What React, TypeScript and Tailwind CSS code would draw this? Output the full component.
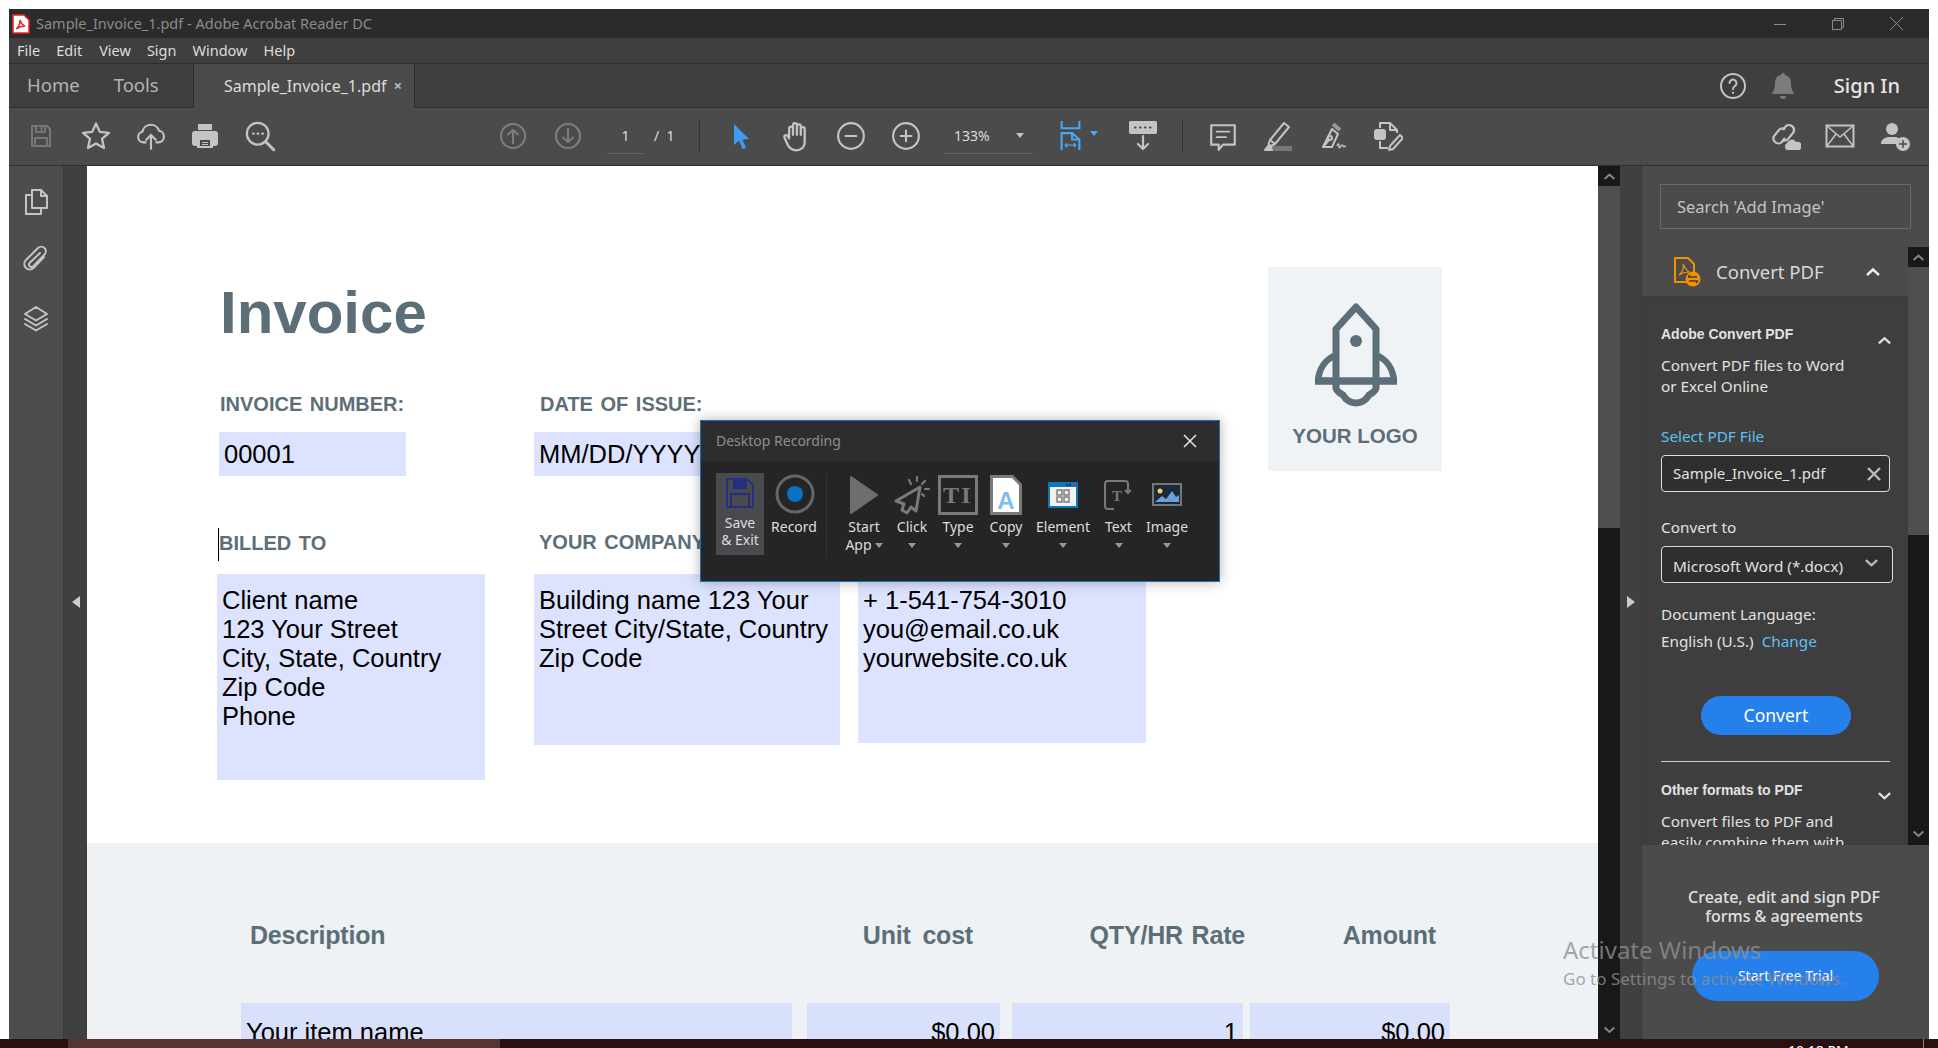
import React from 'react';

const ui = "font-['Noto_Sans',sans-serif]";

type IconProps = { children: React.ReactNode; size?: number; className?: string };

function Ico({ children, size = 28, className = 'text-[#c4c4c4]' }: IconProps) {
  return (
    <svg width={size} height={size} viewBox="0 0 28 28" fill="none" stroke="currentColor" strokeWidth="2" strokeLinejoin="round" strokeLinecap="round" className={className}>
      {children}
    </svg>
  );
}

function Slot({ children, w = 'w-[55px]' }: { children: React.ReactNode; w?: string }) {
  return <div className={`${w} h-full flex items-center justify-center shrink-0`}>{children}</div>;
}

function Caret({ className = 'border-t-[#c4c4c4]' }: { className?: string }) {
  return <span className={`inline-block w-0 h-0 border-l-[4px] border-r-[4px] border-t-[5px] border-l-transparent border-r-transparent ${className}`} />;
}

function Chevron({ up = false, className = 'text-[#aaa]', size = 16 }: { up?: boolean; className?: string; size?: number }) {
  return (
    <svg width={size} height={size} viewBox="0 0 16 16" fill="none" stroke="currentColor" strokeWidth="2.4" className={className}>
      <path d={up ? 'M2 11l6-5.5 6 5.5' : 'M2 5.5l6 5.5 6-5.5'} />
    </svg>
  );
}

function Toolbar() {
  return (
    <div className="h-[58px] bg-[#4b4b4b] border-b border-[#2e2e2e] flex items-center pl-[4px] pr-[7px] pb-[2px] shrink-0">
      <Slot>
        <Ico className="text-[#777]"><path d="M5 4h15l3 3v17H5z" /><path d="M9 4v6h9V4M14.500 6v2" /><path d="M8 24v-8h12v8" /></Ico>
      </Slot>
      <Slot>
        <Ico size={32}><path d="M14 3l3.300 7.400 8 .8-6 5.400 1.700 7.900L14 20.500 7 24.500l1.700-7.900-6-5.400 8-.8z" /></Ico>
      </Slot>
      <Slot>
        <Ico size={30}><path d="M9 20H7a5 5 0 0 1-1-9.900 8 8 0 0 1 15.500-1A5.500 5.500 0 0 1 21 20h-2" /><path d="M14 26V13M9.500 17.500L14 13l4.500 4.500" /></Ico>
      </Slot>
      <div className="w-[54px] h-full flex items-center justify-center shrink-0">
        <svg width="28" height="28" viewBox="0 0 28 28" className="text-[#c4c4c4]" fill="currentColor">
          <path d="M7 2h14v6H7z" />
          <path fillRule="evenodd" d="M4 9h20a3 3 0 0 1 3 3v9a3 3 0 0 1-3 3h-2v2H6v-2H4a3 3 0 0 1-3-3v-9a3 3 0 0 1 3-3zm5 9v6h10v-6z" />
          <path d="M11 20h6v1h-6zM11 22h6v1h-6z" />
        </svg>
      </div>
      <Slot>
        <Ico size={32}><circle cx="12" cy="12" r="9.500" /><path d="M19 19l7 7" strokeWidth="2.600" /><path d="M8 12h.5M12 12h.5M16 12h.5" /></Ico>
      </Slot>
      <div className="w-[198px] shrink-0" />
      <Slot>
        <Ico className="text-[#7e7e7e]"><circle cx="14" cy="14" r="12" /><path d="M14 21V8M9 12.500L14 8l5 4.500" /></Ico>
      </Slot>
      <Slot>
        <Ico className="text-[#7e7e7e]"><circle cx="14" cy="14" r="12" /><path d="M14 7v13M9 15.500l5 4.500 5-4.500" /></Ico>
      </Slot>
      <div className="w-[104px] h-full flex items-center shrink-0 text-[14px] text-[#ddd]">
        <div className="ml-[12px] w-[37px] text-center border-b border-[#666] h-[36px] leading-[36px]">1</div>
        <div className="ml-[10px]">/&nbsp;&nbsp;1</div>
      </div>
      <div className="w-px h-[34px] bg-[#333] shrink-0" />
      <div className="w-[13px] shrink-0" />
      <Slot>
        <svg width="24" height="28" viewBox="0 0 24 28" fill="#3f9cf0"><path d="M5 2l15 15-6.500.5 3.500 8.500-3.500 1-3.500-8.500L5 23z" /></svg>
      </Slot>
      <Slot>
        <Ico size={32}><path d="M8 15V7.500a1.700 1.700 0 0 1 3.400 0V13M11.400 13V4.500a1.700 1.700 0 0 1 3.400 0V13M14.800 13V5.500a1.700 1.700 0 0 1 3.400 0V13M18.200 13V8a1.700 1.700 0 0 1 3.400 0v11c0 5-3.500 7.500-7.500 7.500-4 0-6-2-7.500-5L4 15.500c-.8-2 1.500-3 2.700-1.500L8 16" /></Ico>
      </Slot>
      <Slot>
        <Ico size={30}><circle cx="14" cy="14" r="12" /><path d="M9 14h10" /></Ico>
      </Slot>
      <Slot>
        <Ico size={30}><circle cx="14" cy="14" r="12" /><path d="M9 14h10M14 9v10" /></Ico>
      </Slot>
      <div className="w-[12px] shrink-0" />
      <div className="w-[88px] h-[36px] border-b border-[#666] flex items-center shrink-0 text-[14px] text-[#ddd]">
        <span className="ml-[9px]">133%</span>
        <Caret className="ml-[26px] border-t-[#c4c4c4]" />
      </div>
      <div className="w-[19px] shrink-0" />
      <div className="w-[54px] h-full flex items-center justify-center shrink-0 gap-[9px]">
        <svg width="21" height="29" viewBox="0 0 26 36" fill="none" stroke="#4ba6f5" strokeWidth="2.600">
          <path d="M2 0v9h22V0" />
          <path d="M2 36V15h13l9 8v13" />
          <path d="M15 15v8h9" />
          <path d="M6 30h14M6 30l3-2.500M6 30l3 2.500M20 30l-3-2.500M20 30l-3 2.500" strokeWidth="1.500" />
        </svg>
        <Caret className="border-t-[#4ba6f5] -mt-[4px]" />
      </div>
      <div className="w-[9px] shrink-0" />
      <Slot>
        <svg width="28" height="30" viewBox="0 0 28 30" fill="none" stroke="#c4c4c4" strokeWidth="2.200" strokeLinecap="round">
          <rect x="1" y="1" width="26" height="11" rx="1" fill="#c4c4c4" />
          <path d="M6 6.500h.5M11 6.500h.5M16 6.500h.5M21 6.500h.5" stroke="#4b4b4b" />
          <path d="M14 15v13M9 23l5 5 5-5" strokeLinejoin="round" />
        </svg>
      </Slot>
      <div className="w-px h-[34px] bg-[#333] shrink-0 ml-[12px]" />
      <div className="w-[12px] shrink-0" />
      <Slot>
        <Ico size={30}><path d="M3 4h22v18H14l-4 5v-5H3z" /><path d="M8 10h12M8 15h9" strokeWidth="1.600" /></Ico>
      </Slot>
      <Slot>
        <svg width="30" height="30" viewBox="0 0 30 30" fill="none" stroke="#c4c4c4" strokeWidth="2" strokeLinejoin="round">
          <path d="M21 2l5 4-14 17-5-4z" /><path d="M7 19l-1.500 4L8 25l4-2" />
          <path d="M2 29l3-4h3l1 4z" fill="#c4c4c4" />
          <rect x="10" y="25" width="19" height="5" fill="#777" stroke="none" />
        </svg>
      </Slot>
      <Slot>
        <svg width="30" height="30" viewBox="0 0 30 30" fill="none" stroke="#c4c4c4" strokeWidth="2" strokeLinejoin="round">
          <path d="M14 8l6 5-6 13H5z" /><path d="M15 3l7 6" strokeWidth="4" stroke="#999" />
          <circle cx="12" cy="17" r="2" /><path d="M5 26l6-7" />
          <path d="M19 25c1-3 2-3 2 0s1 2 2 0 2-1 2 0 1 1 3 0" strokeWidth="1.400" />
        </svg>
      </Slot>
      <Slot>
        <svg width="30" height="30" viewBox="0 0 30 30" fill="none" stroke="#c4c4c4" strokeWidth="2" strokeLinejoin="round">
          <path d="M7 7V2h10l7 7v3" /><path d="M17 2v7h7" />
          <rect x="2" y="9" width="10" height="9" rx="2" fill="#c4c4c4" />
          <path d="M7 20v7h8" /><path d="M27 14l3 3-10 11-4 1 1-4z" />
        </svg>
      </Slot>
      <div className="flex-1" />
      <Slot>
        <svg width="32" height="30" viewBox="0 0 32 30" fill="none" stroke="#c4c4c4" strokeWidth="2.200">
          <path d="M14 9l3-4a5 5 0 0 1 7 1 5 5 0 0 1 0 6l-5 6a5 5 0 0 1-6 1" />
          <path d="M16 17l-3 4a5 5 0 0 1-7 0 5 5 0 0 1-1-6l5-6a5 5 0 0 1 6-1" />
          <path d="M18 29a4 4 0 0 1 0-7 5 5 0 0 1 9-1 4 4 0 0 1 3 8z" fill="#c4c4c4" stroke="none" />
        </svg>
      </Slot>
      <Slot>
        <svg width="30" height="24" viewBox="0 0 30 24" fill="none" stroke="#c4c4c4" strokeWidth="2"><rect x="1.500" y="1.500" width="27" height="21" /><path d="M2 2l13 11L28 2M2 22l9-12M28 22l-9-12" strokeWidth="1.500" /></svg>
      </Slot>
      <Slot>
        <svg width="32" height="32" viewBox="0 0 32 32" fill="#c4c4c4">
          <circle cx="13" cy="9" r="6" />
          <path d="M2 24c0-5 4-6 7-7h8c3 1 5 2 5 3a9 9 0 0 0-3 4z" />
          <circle cx="24" cy="24" r="7" />
          <path d="M24 20v8M20 24h8" stroke="#4b4b4b" strokeWidth="1.500" />
        </svg>
      </Slot>
    </div>
  );
}

function Rocket() {
  return (
    <svg width="84" height="104" viewBox="0 0 84 104" fill="none" stroke="#5c6e78" strokeWidth="7" strokeLinejoin="round">
      <path d="M22 76V26L42 4l20 22v50" />
      <path d="M4 78c1-13 8-22 18-26M80 78c-1-13-8-22-18-26" strokeWidth="6.500" />
      <path d="M1 78h82" strokeWidth="7.500" strokeLinejoin="miter" />
      <path d="M22 80v5c0 3 4 5 7 7 3 5 7 8 13 8s10-3 13-8c3-2 7-4 7-7v-5" />
      <circle cx="42" cy="38" r="6" fill="#5c6e78" stroke="none" />
    </svg>
  );
}

function Field({ w, h, children, px = 'pl-[5px]' }: { w: string; h: string; children?: React.ReactNode; px?: string }) {
  return <div className={`${w} ${h} ${px} bg-[#dde3ff] text-[25.500px] leading-[29px] text-black shrink-0`}>{children}</div>;
}

function Invoice() {
  const label = 'text-[20px] leading-[24px] font-bold text-[#5c6e78] [word-spacing:2px]';
  return (
    <div className="flex-1 min-w-0 h-full overflow-hidden bg-white font-['Liberation_Sans',Arial,sans-serif] relative">
      <div className="h-[677px] flex pl-[130px]">
        <div className="w-[1051px] shrink-0">
          <div className="mt-[112px] h-[70px] ml-[3px] text-[60px] leading-[70px] font-bold text-[#5c6e78]">Invoice</div>
          <div className="mt-[44px] flex h-[24px]">
            <div className={`w-[317px] pl-[3px] ${label}`}>INVOICE NUMBER:</div>
            <div className={`pl-[6px] ${label}`}>DATE OF ISSUE:</div>
          </div>
          <div className="mt-[16px] flex h-[44px]">
            <div className="w-[317px] pl-[2px] shrink-0">
              <Field w="w-[187px]" h="h-[44px]"><span className="leading-[44px]">00001</span></Field>
            </div>
            <Field w="w-[170px]" h="h-[44px]"><span className="leading-[44px]">MM/DD/YYYY</span></Field>
          </div>
          <div className="mt-[55px] flex h-[24px]">
            <div className={`w-[317px] pl-[2px] relative ${label}`}>
              BILLED TO
              <span className="absolute left-[1px] -top-[3px] w-px h-[33px] bg-black" />
            </div>
            <div className={`pl-[5px] -mt-px ${label}`}>YOUR COMPANY</div>
          </div>
          <div className="mt-[19px] flex items-start">
            <Field w="w-[268px]" h="h-[206px]" px="pl-[5px] pt-[12px]">
              Client name<br />123 Your Street<br />City, State, Country<br />Zip Code<br />Phone
            </Field>
            <Field w="w-[306px] ml-[49px]" h="h-[171px]" px="pl-[5px] pt-[12px]">
              Building name 123 Your<br />Street City/State, Country<br />Zip Code
            </Field>
            <Field w="w-[288px] ml-[18px]" h="h-[169px]" px="pl-[5px] pt-[12px]">
              + 1-541-754-3010<br />you@email.co.uk<br />yourwebsite.co.uk
            </Field>
          </div>
        </div>
        <div className="mt-[101px] w-[174px] h-[204px] bg-[#f0f3f6] flex flex-col items-center shrink-0">
          <div className="mt-[36px] ml-[2px]"><Rocket /></div>
          <div className="mt-[17px] text-[20.500px] leading-[24px] font-bold text-[#5c6e78]">YOUR LOGO</div>
        </div>
      </div>
      <div className="h-[300px] bg-[#eef2f5] overflow-hidden">
        <div className="mt-[77px] h-[30px] flex text-[25px] leading-[30px] font-bold text-[#5c6e78] tracking-[-0.2px]">
          <div className="ml-[163px] w-[560px]">Description</div>
          <div className="w-[163px] text-right [word-spacing:5px]">Unit cost</div>
          <div className="w-[272px] text-right [word-spacing:2px]">QTY/HR Rate</div>
          <div className="w-[191px] text-right">Amount</div>
        </div>
        <div className="mt-[53px] flex text-[25.500px] leading-[30px] text-black">
          <div className="ml-[154px] w-[551px] h-[60px] bg-[#d9e0fb] pt-[14px] pl-[5px]">Your item name</div>
          <div className="ml-[15px] w-[193px] h-[60px] bg-[#d9e0fb] pt-[14px] pr-[5px] text-right">$0.00</div>
          <div className="ml-[12px] w-[231px] h-[60px] bg-[#d9e0fb] pt-[14px] pr-[5px] text-right">1</div>
          <div className="ml-[7px] w-[200px] h-[60px] bg-[#d9e0fb] pt-[14px] pr-[5px] text-right">$0.00</div>
        </div>
      </div>
    </div>
  );
}

function RecItem({ label, children, w, second }: { label: string; children: React.ReactNode; w: string; second?: boolean }) {
  return (
    <div className={`${w} flex flex-col items-center shrink-0`}>
      <div className="h-[44px] flex items-center justify-center">{children}</div>
      <div className="mt-[1px] h-[18px] leading-[18px] whitespace-nowrap">{label}</div>
      {second ? (
        <div className="h-[18px] leading-[18px] flex items-center gap-[3px]">App<Caret className="border-t-[#999]" /></div>
      ) : (
        <div className="h-[18px] flex items-center justify-center"><Caret className="border-t-[#999]" /></div>
      )}
    </div>
  );
}

function RecordingDialog() {
  return (
    <div className={`absolute left-[700px] top-[420px] w-[520px] h-[162px] bg-[#252525] border border-[#1d6fb0] shadow-[0_0_12px_rgba(0,0,0,0.3)] ${ui} text-[14px] text-[#ddd] z-10`}>
      <div className="h-[41px] bg-[#2d2d2f] flex items-center justify-between pl-[15px] pr-[21px] pb-[2px] text-[#8e8e8e]">
        <span>Desktop Recording</span>
        <svg width="16" height="16" viewBox="0 0 16 16" stroke="#e6e6e6" strokeWidth="1.500"><path d="M2 2l12 12M14 2L2 14" /></svg>
      </div>
      <div className="flex items-start pt-[11px] pl-[15px]">
        <div className="w-[48px] h-[82px] bg-[#4a4a4e] flex flex-col items-center shrink-0 leading-[17px] text-center pt-[4px]">
          <svg width="30" height="32" viewBox="0 0 30 32" fill="none" stroke="#22307f" strokeWidth="2"><path d="M2 2h20l6 6v22H2z" /><path d="M9 2v9h12V2" fill="#22307f" /><path d="M6 30V17h18v13" /></svg>
          <div className="mt-[5px]">Save</div>
          <div>&amp; Exit</div>
        </div>
        <div className="w-[62px] flex flex-col items-center shrink-0">
          <div className="h-[42px] flex items-center">
            <svg width="40" height="40" viewBox="0 0 40 40"><circle cx="20" cy="20" r="18" fill="none" stroke="#666" strokeWidth="3" /><circle cx="20" cy="20" r="8" fill="#0a72c4" /></svg>
          </div>
          <div className="mt-[3px] leading-[18px] -ml-[2px]">Record</div>
        </div>
        <div className="w-px h-[84px] bg-[#333] shrink-0" />
        <div className="w-[12px] shrink-0" />
        <RecItem label="Start" w="w-[50px]" second>
          <svg width="30" height="40" viewBox="0 0 30 40" fill="#6e6e6e"><path d="M2 2l26 18L2 38z" stroke="#6e6e6e" strokeWidth="2" strokeLinejoin="round" /></svg>
        </RecItem>
        <RecItem label="Click" w="w-[46px]">
          <svg width="38" height="40" viewBox="0 0 38 40" fill="none" stroke="#7a7a7a" strokeWidth="3" strokeLinejoin="round" strokeLinecap="round">
            <path d="M27 12L3 26l8 3-2 6 5 3 4-6 5 4z" />
            <path d="M16 5l2 4M24 2v4M32 6l-3 3M36 14h-4M31 21l-2-2" strokeWidth="2.200" />
          </svg>
        </RecItem>
        <RecItem label="Type" w="w-[46px]">
          <svg width="40" height="40" viewBox="0 0 40 40">
            <rect x="1.500" y="1.500" width="37" height="37" fill="none" stroke="#7a7a7a" strokeWidth="3" />
            <text x="13" y="28" textAnchor="middle" fontFamily="'Liberation Serif',serif" fontWeight="700" fontSize="24" fill="#7a7a7a">T</text>
            <text x="28" y="28" textAnchor="middle" fontFamily="'Liberation Serif',serif" fontWeight="700" fontSize="24" fill="#7a7a7a">I</text>
          </svg>
        </RecItem>
        <RecItem label="Copy" w="w-[50px]">
          <svg width="32" height="40" viewBox="0 0 32 40">
            <path d="M1.500 1.500h21l8 8v29h-29z" fill="#fff" stroke="#7a7a7a" strokeWidth="3" />
            <text x="16" y="34" textAnchor="middle" fontFamily="'Liberation Sans',sans-serif" fontWeight="700" fontSize="24" fill="#7cc0ea">A</text>
          </svg>
        </RecItem>
        <RecItem label="Element" w="w-[64px]">
          <svg width="30" height="26" viewBox="0 0 30 26">
            <rect width="30" height="26" fill="#0f76ba" />
            <rect x="2" y="5" width="26" height="19" fill="#f2f2f2" />
            <rect x="18" y="2" width="2" height="1.500" fill="#222" /><rect x="21" y="2" width="2" height="1.500" fill="#222" /><rect x="25" y="2" width="2" height="1.500" fill="#e33" />
            <g fill="none" stroke="#777" strokeWidth="1.400"><rect x="9" y="8" width="5" height="5" /><rect x="16" y="8" width="5" height="5" /><rect x="9" y="15" width="5" height="5" /><rect x="16" y="15" width="5" height="5" /></g>
          </svg>
        </RecItem>
        <RecItem label="Text" w="w-[47px]">
          <svg width="30" height="30" viewBox="0 0 30 30" fill="none" stroke="#7a7a7a" strokeWidth="2">
            <path d="M24 7V4a3 3 0 0 0-3-3H4a3 3 0 0 0-3 3v22a3 3 0 0 0 3 3h6" />
            <text x="13" y="21" textAnchor="middle" fontFamily="'Liberation Serif',serif" fontWeight="700" fontSize="15" fill="#7a7a7a" stroke="none">T</text>
            <path d="M24 7v5M21 10l3 3 3-3" />
          </svg>
        </RecItem>
        <RecItem label="Image" w="w-[50px]">
          <svg width="30" height="24" viewBox="0 0 30 24">
            <rect x="1" y="1" width="28" height="21" fill="#1b2a3a" stroke="#777" strokeWidth="2" />
            <circle cx="8" cy="8" r="2.500" fill="#f2cf63" />
            <path d="M3 19l7-6 4 3 6-8 4 6 3-2v7z" fill="#6f9fd8" />
          </svg>
        </RecItem>
      </div>
    </div>
  );
}

function PanelTools() {
  return (
    <div className={`w-[287px] h-full bg-[#4b4b4b] flex flex-col shrink-0 ${ui} text-[15.300px] text-[#e2e2e2]`}>
      <div className="h-[81px] pt-[18px] pl-[18px] shrink-0">
        <div className="w-[251px] h-[45px] border border-[#6a6a6a] pl-[16px] leading-[43px] text-[#c4c4c4] text-[16.500px]">Search 'Add Image'</div>
      </div>
      <div className="flex h-[598px] shrink-0 overflow-hidden">
        <div className="w-[266px] flex flex-col shrink-0">
          <div className="h-[50px] border-b border-[#3a3a3a] flex items-center pl-[31px] shrink-0">
            <svg width="28" height="30" viewBox="0 0 28 30" fill="none" stroke="#f29100" strokeWidth="2">
              <path d="M16 25H2V1h13l6 6v8" /><path d="M6 18c4-3 5-8 4-11 2 4 3 6 6 8-3 0-7 1-10 3z" strokeWidth="1.200" />
              <circle cx="20" cy="22" r="7.500" fill="#f29100" stroke="none" />
              <path d="M15 20h9M17 18l-2 2M16 24h9M23 26l2-2" stroke="#3e3e3e" strokeWidth="1.300" />
            </svg>
            <span className="ml-[15px] text-[18.500px] text-[#d9d9d9]">Convert PDF</span>
            <Chevron up className="ml-[41px] text-[#eee]" />
          </div>
          <div className="flex-1 bg-[#3e3e3e] pl-[19px] pr-[15px] overflow-hidden">
            <div className="mt-[27px] h-[20px] flex justify-between items-center">
              <span className="font-['Liberation_Sans',sans-serif] font-bold text-[14px]">Adobe Convert PDF</span>
              <Chevron up className="mt-[12px] mr-[1px]" size={15} />
            </div>
            <div className="mt-[11px] leading-[21px]">Convert PDF files to Word<br />or Excel Online</div>
            <div className="mt-[29px] h-[20px] leading-[20px] text-[#5fc0f2]">Select PDF File</div>
            <div className="mt-[9px] h-[37px] w-[229px] rounded-[4px] border border-[#ddd] bg-[#2f2f2f] flex items-center justify-between pl-[11px] pr-[8px] text-[15px]">
              <span>Sample_Invoice_1.pdf</span>
              <svg width="14" height="14" viewBox="0 0 14 14" stroke="#bbb" strokeWidth="2.400"><path d="M1 1l12 12M13 1L1 13" /></svg>
            </div>
            <div className="mt-[25px] h-[20px] leading-[20px]">Convert to</div>
            <div className="mt-[9px] h-[37px] w-[232px] rounded-[4px] border border-[#ddd] bg-[#2f2f2f] flex items-center justify-between pl-[11px] pr-[13px]">
              <span className="pt-[3px]">Microsoft Word (*.docx)</span>
              <Chevron className="text-[#bbb] -mt-[4px]" size={15} />
            </div>
            <div className="mt-[21px] h-[20px] leading-[20px]">Document Language:</div>
            <div className="mt-[7px] h-[20px] leading-[20px]">English (U.S.)&nbsp; <span className="text-[#5fc0f2]">Change</span></div>
            <div className="mt-[45px] ml-[40px] w-[150px] h-[39px] rounded-full bg-[#2680eb] text-white text-center leading-[39px] text-[17.500px]">Convert</div>
            <div className="mt-[26px] w-[229px] h-px bg-[#ccc]" />
            <div className="mt-[18px] h-[20px] flex justify-between items-center">
              <span className="font-['Liberation_Sans',sans-serif] font-bold text-[14px]">Other formats to PDF</span>
              <Chevron className="mt-[10px] mr-[1px]" size={15} />
            </div>
            <div className="mt-[11px] leading-[21px]">Convert files to PDF and<br />easily combine them with</div>
          </div>
        </div>
        <div className="w-[21px] h-full bg-[#181818] flex flex-col shrink-0">
          <div className="h-[20px] flex items-center justify-center"><Chevron up className="text-[#888]" size={13} /></div>
          <div className="h-[268px] bg-[#4f4f4f] shrink-0" />
          <div className="flex-1" />
          <div className="h-[20px] flex items-center justify-center mb-[2px]"><Chevron className="text-[#888]" size={13} /></div>
        </div>
      </div>
      <div className="flex-1 min-h-0 flex flex-col items-center font-medium">
        <div className="mt-[43px] text-[16px] leading-[19px] text-center -ml-[3px]">Create, edit and sign PDF<br />forms &amp; agreements</div>
        <div className="mt-[25px] w-[187px] h-[50px] rounded-full bg-[#2680eb] text-white font-normal text-[14px] text-center leading-[50px]">Start Free Trial</div>
      </div>
    </div>
  );
}

export default function App() {
  return (
    <div className="relative w-[1938px] h-[1048px] overflow-hidden bg-white flex flex-col">
      <div className={`mt-[9px] mx-[9px] flex-1 min-h-0 flex flex-col ${ui} bg-[#4b4b4b]`}>
        <div className="h-[29px] bg-[#2b2b2b] flex items-center pl-[3px] shrink-0">
          <svg width="18" height="20" viewBox="0 0 18 20">
            <path d="M1 1h11l5 5v13H1z" fill="#fff" stroke="#e22" strokeWidth="1.500" />
            <path d="M4 15c3-2 4-5 4-9 1 3 2 5 5 6-3 0-6 1-9 3z" fill="none" stroke="#e22" strokeWidth="1.500" />
          </svg>
          <span className="ml-[6px] text-[14.500px] text-[#8c8c8c]">Sample_Invoice_1.pdf - Adobe Acrobat Reader DC</span>
          <div className="ml-auto flex items-center text-[#8a8a8a]">
            <svg width="14" height="14" viewBox="0 0 14 14" stroke="currentColor"><path d="M1 7.500h12" /></svg>
            <svg className="ml-[44px]" width="14" height="14" viewBox="0 0 14 14" fill="none" stroke="currentColor"><path d="M1.500 3.500h9v9h-9zM3.500 3.500v-2h9v9h-2" /></svg>
            <svg className="ml-[44px] mr-[25px]" width="15" height="15" viewBox="0 0 15 15" stroke="currentColor"><path d="M1 1l13 13M14 1L1 14" /></svg>
          </div>
        </div>
        <div className="h-[26px] bg-[#3f3f3f] border-b border-[#2e2e2e] flex items-center pl-[8px] text-[14.500px] text-[#ddd] shrink-0">
          <span>File</span>
          <span className="ml-[16px]">Edit</span>
          <span className="ml-[17px]">View</span>
          <span className="ml-[16px]">Sign</span>
          <span className="ml-[16px]">Window</span>
          <span className="ml-[16px]">Help</span>
        </div>
        <div className="h-[44px] bg-[#3f3f3f] border-b border-[#2e2e2e] flex items-stretch shrink-0">
          <div className="w-[184px] flex items-center pl-[18px] text-[18.500px] text-[#b4b4b4] gap-[34px] pb-px">
            <span>Home</span>
            <span>Tools</span>
          </div>
          <div className="w-[222px] -mb-px bg-[#4b4b4b] border-l border-r border-[#2e2e2e] flex items-center pl-[30px] pb-px text-[16px] text-[#ddd]">
            <span>Sample_Invoice_1.pdf</span>
            <span className="ml-[7px] text-[15px] font-bold text-[#bbb]">×</span>
          </div>
          <div className="flex-1 flex items-center justify-end">
            <Ico className="text-[#c4c4c4]"><circle cx="14" cy="14" r="12" /><path d="M10.500 11a3.500 3.500 0 1 1 5.500 3c-1.300 1-2 1.500-2 3M14 20.500v.5" /></Ico>
            <svg className="ml-[24px]" width="24" height="28" viewBox="0 0 24 28" fill="#7c7c7c"><path d="M12 1a2 2 0 0 1 2 2 8 8 0 0 1 6 8c0 7 2 8 3 11H1c1-3 3-4 3-11a8 8 0 0 1 6-8 2 2 0 0 1 2-2zM9 24h6a3 3 0 0 1-6 0z" /></svg>
            <span className="ml-[39px] mr-[29px] text-[20px] font-medium text-[#e6e6e6]">Sign In</span>
          </div>
        </div>
        <Toolbar />
        <div className="flex-1 min-h-0 flex">
          <div className="w-[55px] h-full bg-[#4d4d4d] border-r border-[#3a3a3a] flex flex-col items-center shrink-0">
            <div className="mt-[22px]">
              <Ico><path d="M10 20V2h9l6 6v12z" /><path d="M19 2v6h6" /><path d="M10 7H4v19h15v-6" /></Ico>
            </div>
            <div className="mt-[29px]">
              <Ico><path d="M22 12L11.500 23a5.500 5.500 0 0 1-8-7.500L16 3a4.500 4.500 0 0 1 6.500 6.500L11 21.500a2.500 2.500 0 0 1-3.500-3.500L18 8" /></Ico>
            </div>
            <div className="mt-[32px]">
              <Ico><path d="M14 2l11 7-11 6.500L3 9zM3 14l11 6.500L25 14M3 19l11 6.500L25 19" /></Ico>
            </div>
          </div>
          <div className="w-[23px] h-full bg-[#404040] flex items-start justify-center pt-[430px] shrink-0">
            <span className="w-0 h-0 border-y-[6px] border-r-[8px] border-y-transparent border-r-[#ccc]" />
          </div>
          <Invoice />
          <div className="w-[22px] h-full bg-[#181818] flex flex-col shrink-0">
            <div className="h-[20px] flex items-center justify-center"><Chevron up className="text-[#888]" size={13} /></div>
            <div className="h-[342px] bg-[#4f4f4f] shrink-0" />
            <div className="flex-1" />
            <div className="h-[20px] flex items-center justify-center"><Chevron className="text-[#888]" size={13} /></div>
          </div>
          <div className="w-[22px] h-full bg-[#404040] border-r border-[#3a3a3a] flex items-start justify-center pt-[430px] shrink-0">
            <span className="w-0 h-0 border-y-[6px] border-l-[8px] border-y-transparent border-l-[#ccc]" />
          </div>
          <PanelTools />
        </div>
      </div>
      <div className="h-[9px] bg-[#2a1010] relative overflow-hidden shrink-0">
        <div className="ml-[68px] w-[432px] h-full bg-[#553533]" />
        <span className={`absolute left-[1788px] top-[3px] text-[14px] leading-[18px] text-white ${ui}`}>10:18 PM</span>
        <div className="absolute left-[1923px] top-0 w-px h-full bg-[#888]" />
      </div>
      <RecordingDialog />
      <div className={`absolute left-[1563px] top-[934px] z-20 ${ui} text-[#8f8f8f]/80 pointer-events-none`}>
        <div className="text-[24px] leading-[32px]">Activate Windows</div>
        <div className="text-[17px] leading-[26px]">Go to Settings to activate Windows.</div>
      </div>
    </div>
  );
}
